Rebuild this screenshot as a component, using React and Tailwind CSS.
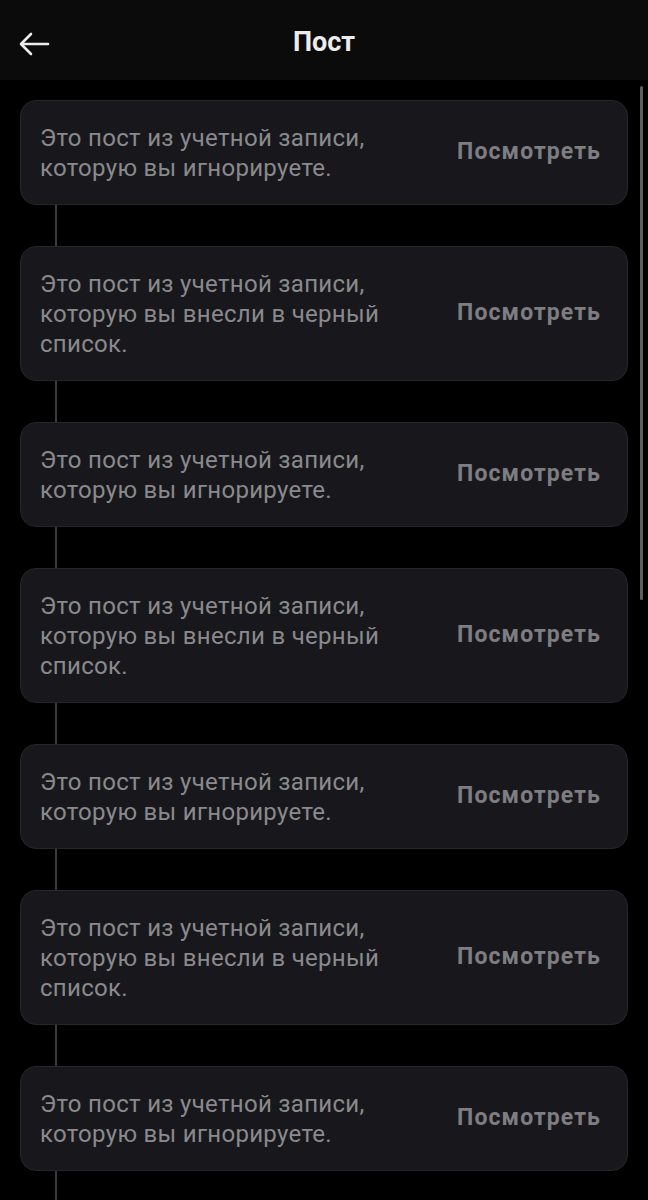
import React from 'react';

const posts = [
  { lines: ['Это пост из учетной записи,', 'которую вы игнорируете.'] },
  { lines: ['Это пост из учетной записи,', 'которую вы внесли в черный', 'список.'] },
  { lines: ['Это пост из учетной записи,', 'которую вы игнорируете.'] },
  { lines: ['Это пост из учетной записи,', 'которую вы внесли в черный', 'список.'] },
  { lines: ['Это пост из учетной записи,', 'которую вы игнорируете.'] },
  { lines: ['Это пост из учетной записи,', 'которую вы внесли в черный', 'список.'] },
  { lines: ['Это пост из учетной записи,', 'которую вы игнорируете.'] },
];

const HiddenPost = ({ lines }) => (
  <div className="flex items-center justify-between rounded-[16px] border border-[#26262a] bg-[#18181c] pl-[19px] pr-[26px] py-[21.5px]">
    <div className="text-[24px] leading-[30px] tracking-[0.3px] text-[#8a8a8d]">
      {lines.map((l, i) => (
        <div key={i}>{l}</div>
      ))}
    </div>
    <div className="text-[23px] font-bold tracking-[1.1px] text-[#7e7e82]">Посмотреть</div>
  </div>
);

const App = () => {
  return (
    <div
      className="h-[1200px] overflow-hidden bg-black"
      style={{ fontFamily: 'Roboto, "Noto Sans", sans-serif' }}
    >
      {/* header */}
      <div className="relative flex h-[80px] items-center justify-center bg-[#0b0b0b] pb-[2px] pt-[6px]">
        <svg
          className="absolute left-[18px] top-[30px]"
          width="32"
          height="28"
          viewBox="0 0 32 28"
          fill="none"
          stroke="#ececec"
          strokeWidth="2.6"
          strokeLinecap="round"
          strokeLinejoin="round"
        >
          <path d="M30 14H4" />
          <path d="M13 4L3 14L13 24" />
        </svg>
        <div className="text-[27px] font-bold text-[#ececec]">Пост</div>
      </div>

      {/* list */}
      <div className="relative px-[20px] pt-[20px]">
        <div className="absolute right-[5px] top-[6px] h-[514px] w-[3px] rounded-full bg-[#5e5e60]" />
        {posts.map((p, i) => (
          <div key={i}>
            <HiddenPost lines={p.lines} />
            <div className="ml-[35px] h-[41px] w-[2px] bg-[#3a3a3c]" />
          </div>
        ))}
      </div>
    </div>
  );
};

export default App;
